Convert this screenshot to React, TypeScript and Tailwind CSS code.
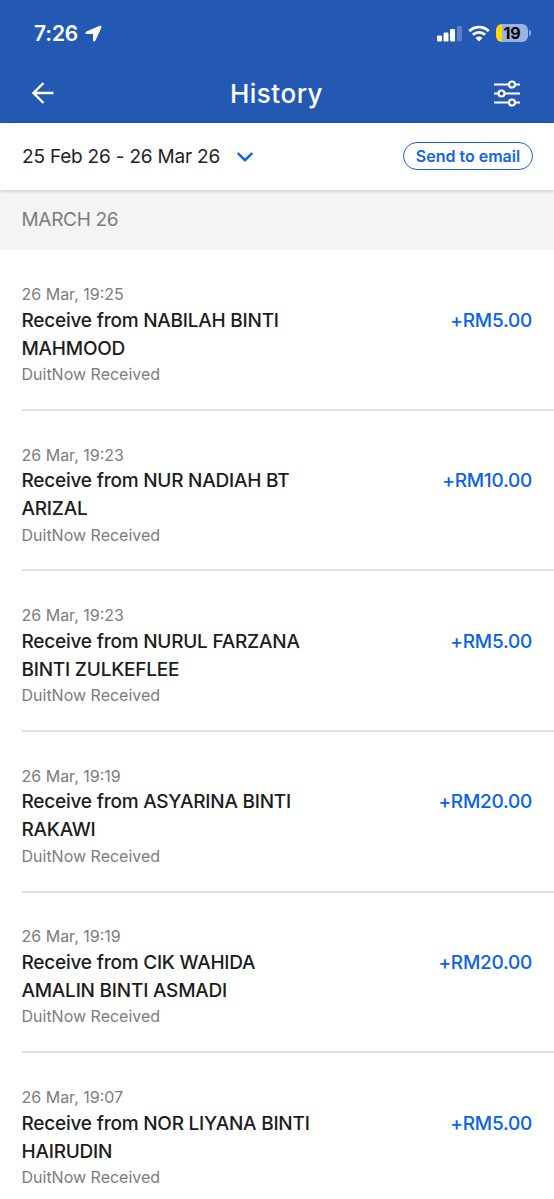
type Transaction = {
  date: string;
  title: string;
  amount: string;
};

const transactions: Transaction[] = [
  { date: "26 Mar, 19:25", title: "Receive from NABILAH BINTI MAHMOOD", amount: "+RM5.00" },
  { date: "26 Mar, 19:23", title: "Receive from NUR NADIAH BT ARIZAL", amount: "+RM10.00" },
  { date: "26 Mar, 19:23", title: "Receive from NURUL FARZANA BINTI ZULKEFLEE", amount: "+RM5.00" },
  { date: "26 Mar, 19:19", title: "Receive from ASYARINA BINTI RAKAWI", amount: "+RM20.00" },
  { date: "26 Mar, 19:19", title: "Receive from CIK WAHIDA AMALIN BINTI ASMADI", amount: "+RM20.00" },
  { date: "26 Mar, 19:07", title: "Receive from NOR LIYANA BINTI HAIRUDIN", amount: "+RM5.00" },
];

function StatusBar() {
  return (
    <div className="flex h-[66px] items-center justify-between pr-[23px] pl-[34px]">
      <div className="flex items-center gap-[7px] pt-px">
        <span className="text-[21px] leading-7 font-semibold tracking-[-0.1px]">7:26</span>
        <svg width="17" height="17" viewBox="0 0 17 17" fill="currentColor" stroke="currentColor" strokeLinejoin="round">
          <path d="M15 1.200 1.300 7.100C.4 7.500.6 8.500 1.500 8.500H7.700c.5 0 .8.300.8.800V15.500c0 .9 1 1 1.400.2L16 2.300C16.300 1.500 15.700.9 15 1.200Z" />
        </svg>
      </div>

      <div className="flex items-center">
        <svg width="26" height="17" viewBox="0 0 26 17" fill="currentColor">
          <rect x="0" y="10.500" width="5" height="6" rx="1.300" />
          <rect x="6.500" y="7.500" width="5" height="9" rx="1.300" />
          <rect x="13" y="4" width="5" height="12.500" rx="1.300" />
          <rect x="20" y="1" width="5" height="15.500" rx="1.300" opacity="0.25" />
        </svg>
        <svg className="ml-[5px]" width="22" height="17" viewBox="0 0 22 17">
          <g fill="none" stroke="currentColor" strokeWidth="2.900">
            <path d="M1.300 6.100a13.900 13.900 0 0 1 19.400 0" />
            <path d="M4.900 9.800a8.800 8.800 0 0 1 12.200 0" />
          </g>
          <path d="M11 16.600 7.500 13a5 5 0 0 1 7 0Z" fill="currentColor" />
        </svg>
        <div className="ml-[6px] flex h-[18px] w-[32px] items-center justify-center overflow-hidden rounded-[6px] bg-[linear-gradient(90deg,#ffd60a_6.500px,#9bb3df_6.500px)]">
          <span className="text-[16px] leading-none font-bold tracking-[-0.2px] text-black">19</span>
        </div>
        <div className="ml-px h-[6px] w-[2px] rounded-r-full bg-[#8ba7da]" />
      </div>
    </div>
  );
}

function Header() {
  return (
    <header className="h-[123px] bg-[#2359b3] text-white">
      <StatusBar />
      <div className="grid h-[57px] grid-cols-[1fr_auto_1fr] items-center pr-[33px] pb-[3px] pl-[32px]">
        <svg width="22" height="22" viewBox="0 0 22 22" fill="none" stroke="currentColor" strokeWidth="2.400">
          <path d="M11.500 1 1.500 11l10 10M1.500 11H21.500" />
        </svg>
        <h1 className="pt-0.5 text-[26px] leading-8 font-medium tracking-[0.5px]">History</h1>
        <svg className="justify-self-end" width="28" height="27" viewBox="0 0 28 27" fill="none" stroke="currentColor" strokeWidth="2.200">
          <path d="M1 4.500H15.500M22.500 4.500H27M1 13.500H5M12 13.500H27M1 22.500H15.500M22.500 22.500H27" />
          <circle cx="19" cy="4.500" r="3" />
          <circle cx="8.500" cy="13.500" r="3" />
          <circle cx="19" cy="22.500" r="3" />
        </svg>
      </div>
    </header>
  );
}

function FilterBar() {
  return (
    <div className="relative flex h-[67px] items-center justify-between bg-white px-[22px] shadow-[0_1px_4px_rgba(0,0,0,0.2)]">
      <button className="flex items-center gap-[17px]">
        <span className="text-[19px] leading-7 tracking-[-0.2px] text-[#222]">25 Feb 26 - 26 Mar 26</span>
        <svg width="16" height="10" viewBox="0 0 16 10" fill="none" stroke="#0b63f0" strokeWidth="2.400">
          <path d="m0.800 1 7.200 7.200L15.200 1" />
        </svg>
      </button>
      <button className="mr-[-1px] mb-0.5 h-[28px] w-[130px] rounded-full border border-[#1264e8] text-[16px] leading-none font-semibold text-[#1264e8]">
        Send to email
      </button>
    </div>
  );
}

function TransactionRow({ date, title, amount }: Transaction) {
  return (
    <li className="ml-[21.500px] flex h-[160.600px] justify-between border-b-2 border-[#dedede] pt-[31.700px] pr-[22px]">
      <div className="w-[300px]">
        <p className="text-[16px] leading-6 text-[#7c7c7c]">{date}</p>
        <p className="pt-[0.600px] text-[19px] leading-7 font-medium tracking-[-0.220px] text-[#1c1c1c]">{title}</p>
        <p className="mt-[-0.600px] text-[16px] leading-6 text-[#7c7c7c]">DuitNow Received</p>
      </div>
      <p className="pt-[24.600px] text-[19px] leading-7 font-medium tracking-[-0.250px] text-[#0b62e8]">{amount}</p>
    </li>
  );
}

export default function App() {
  return (
    <div className="h-[1199px] w-[554px] overflow-hidden bg-white font-['Inter',sans-serif]">
      <Header />
      <FilterBar />
      <h2 className="flex h-[60.300px] items-center bg-[#f4f4f4] px-[21.500px] text-[19px] tracking-[-0.300px] text-[#7c7c7c]">
        MARCH 26
      </h2>
      <ul>
        {transactions.map((item) => (
          <TransactionRow key={item.title} {...item} />
        ))}
      </ul>
    </div>
  );
}
